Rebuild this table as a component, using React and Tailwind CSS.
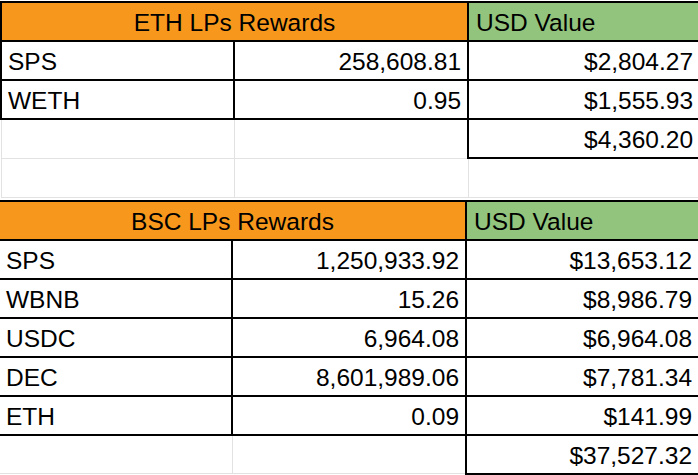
const ethRows = [
  ['SPS', '258,608.81', '$2,804.27'],
  ['WETH', '0.95', '$1,555.93'],
]

const bscRows = [
  ['SPS', '1,250,933.92', '$13,653.12'],
  ['WBNB', '15.26', '$8,986.79'],
  ['USDC', '6,964.08', '$6,964.08'],
  ['DEC', '8,601,989.06', '$7,781.34'],
  ['ETH', '0.09', '$141.99'],
]

const black = 'border-2 border-black pt-[4px] pb-0'
const grey = 'border border-[#e2e2e2] pt-[4px] pb-0'

export default function App() {
  return (
    <div
      className="w-[698px] h-[475px] overflow-hidden bg-white text-black text-[24.5px] leading-none"
      style={{ fontFamily: '"Liberation Sans", Arial, sans-serif' }}
    >
      {/* ETH section */}
      <div className="pt-[1px]">
        <table className="border-collapse table-fixed w-[703px]">
          <colgroup>
            <col className="w-[233px]" />
            <col className="w-[234px]" />
            <col className="w-[236px]" />
          </colgroup>
          <tbody>
            <tr className="h-[39px]">
              <td colSpan={2} className={`${black} bg-[#f7981d] text-center`}>
                ETH LPs Rewards
              </td>
              <td className={`${black} bg-[#93c47d] text-left px-[7px]`}>USD Value</td>
            </tr>
            {ethRows.map((row) => (
              <tr key={row[0]} className="h-[39px]">
                <td className={`${black} px-[6px]`}>{row[0]}</td>
                <td className={`${black} text-right px-[6px]`}>{row[1]}</td>
                <td className={`${black} text-right pl-[6px] pr-[10px]`}>{row[2]}</td>
              </tr>
            ))}
            <tr className="h-[39px]">
              <td className={grey}></td>
              <td className={grey}></td>
              <td className={`${black} text-right pl-[6px] pr-[10px]`}>$4,360.20</td>
            </tr>
            <tr className="h-[39px]">
              <td className={grey}></td>
              <td className={grey}></td>
              <td className={grey}></td>
            </tr>
          </tbody>
        </table>
      </div>

      {/* BSC section */}
      <div className="mt-[2px] -ml-[2px]">
        <table className="border-collapse table-fixed w-[706px]">
          <colgroup>
            <col className="w-[233px]" />
            <col className="w-[234px]" />
            <col className="w-[239px]" />
          </colgroup>
          <tbody>
            <tr className="h-[39px]">
              <td colSpan={2} className={`${black} bg-[#f7981d] text-center`}>
                BSC LPs Rewards
              </td>
              <td className={`${black} bg-[#93c47d] text-left px-[7px]`}>USD Value</td>
            </tr>
            {bscRows.map((row) => (
              <tr key={row[0]} className="h-[39px]">
                <td className={`${black} pl-[6px]`}>{row[0]}</td>
                <td className={`${black} text-right px-[6px]`}>{row[1]}</td>
                <td className={`${black} text-right pl-[6px] pr-[12px]`}>{row[2]}</td>
              </tr>
            ))}
            <tr className="h-[39px]">
              <td className={grey}></td>
              <td className={grey}></td>
              <td className={`${black} text-right pl-[6px] pr-[12px]`}>$37,527.32</td>
            </tr>
          </tbody>
        </table>
      </div>
    </div>
  )
}
